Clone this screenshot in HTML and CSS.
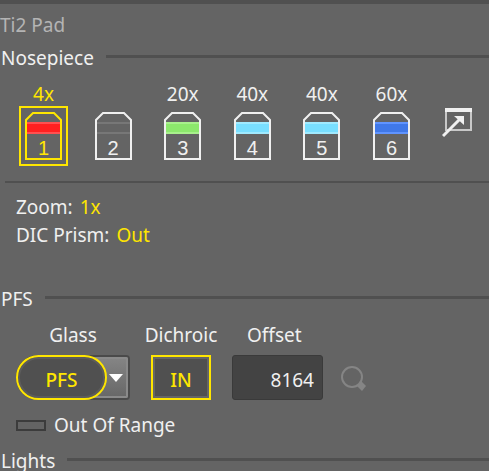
FILE: index.html
```html
<!DOCTYPE html>
<html lang="en">
<head>
<meta charset="utf-8">
<title>Ti2 Pad</title>
<link rel="stylesheet" href="styles.css">
</head>
<body>
<svg class="defs" aria-hidden="true">
  <symbol id="lens" viewBox="0 0 37 48">
    <rect class="band-edge" x="2" y="10" width="33" height="12"/>
    <rect class="band" x="2" y="12" width="33" height="8"/>
    <path d="M1 47V8L8 1H29L36 8V47Z" fill="none" stroke="currentColor" stroke-width="2"/>
  </symbol>
</svg>
<main class="pad">
  <h1 class="title">Ti2 Pad</h1>

  <section>
    <h2 class="heading">Nosepiece</h2>
    <div class="nosepiece">
      <div class="lenses">
        <button class="lens red selected" type="button" aria-pressed="true"><span class="power">4x</span><span class="frame"><svg><use href="#lens"/></svg><span class="slot">1</span></span></button>
        <button class="lens empty" type="button"><span class="power"></span><span class="frame"><svg><use href="#lens"/></svg><span class="slot">2</span></span></button>
        <button class="lens green" type="button"><span class="power">20x</span><span class="frame"><svg><use href="#lens"/></svg><span class="slot">3</span></span></button>
        <button class="lens cyan" type="button"><span class="power">40x</span><span class="frame"><svg><use href="#lens"/></svg><span class="slot">4</span></span></button>
        <button class="lens cyan" type="button"><span class="power">40x</span><span class="frame"><svg><use href="#lens"/></svg><span class="slot">5</span></span></button>
        <button class="lens blue" type="button"><span class="power">60x</span><span class="frame"><svg><use href="#lens"/></svg><span class="slot">6</span></span></button>
      </div>
      <button class="icon-button" type="button" aria-label="Open nosepiece window">
        <svg width="30" height="30" viewBox="0 0 30 30">
          <path d="M4 1H29V22H4Z" fill="none" stroke="#c8c8c8" stroke-width="2"/>
          <path d="M3 0H30V4H3Z" fill="#f0f0f0"/>
          <path d="M1 28L18 11" stroke="#f0f0f0" stroke-width="3"/>
          <path d="M12 8H22V17Z" fill="#f0f0f0"/>
        </svg>
      </button>
    </div>
    <dl class="status">
      <div><dt>Zoom:</dt><dd>1x</dd></div>
      <div><dt>DIC Prism:</dt><dd>Out</dd></div>
    </dl>
  </section>

  <section class="pfs">
    <h2 class="heading">PFS</h2>
    <div class="controls">
      <div class="field glass">
        <span class="label" id="glass">Glass</span>
        <div class="split" role="group" aria-labelledby="glass">
          <button class="pill" type="button">PFS</button>
          <button class="arrow" type="button" aria-label="Choose glass"><svg width="14" height="8" viewBox="0 0 14 8"><path d="M0 0H14L7 8Z" fill="#fff"/></svg></button>
        </div>
      </div>
      <div class="field dichroic">
        <span class="label" id="dichroic">Dichroic</span>
        <button class="toggle" type="button" aria-describedby="dichroic">IN</button>
      </div>
      <div class="field offset">
        <label class="label" for="offset">Offset</label>
        <input id="offset" type="text" value="8164">
      </div>
      <button class="icon-button search" type="button" aria-label="Search focus">
        <svg width="26" height="26" viewBox="0 0 26 26">
          <circle cx="11" cy="11" r="10" fill="none" stroke="#858585" stroke-width="2"/>
          <path d="M20 15L25 20L21 25L16 20Z" fill="#858585"/>
        </svg>
      </button>
    </div>
    <div class="range"><span class="lamp"></span>Out Of Range</div>
  </section>

  <section>
    <h2 class="heading">Lights</h2>
  </section>
</main>
</body>
</html>
```
FILE: styles.css
```css
* { box-sizing: border-box; }

html { background: #646464; }

body {
  margin: 0;
  overflow: hidden;
  color: #f0f0f0;
  font: 19px/28px "Noto Sans", "Open Sans", sans-serif;
}

button, input { font: inherit; color: inherit; }

button {
  margin: 0;
  padding: 0;
  border: 0;
  background: none;
}

svg { display: block; }

.defs { position: absolute; width: 0; height: 0; }

.pad { border-top: 4px solid #505050; padding-top: 7px; }

.title, .heading { margin: 0; font-size: 19px; font-weight: 400; }

.title { color: #b4b4b4; line-height: 28px; padding-bottom: 5px; }

.heading { display: flex; align-items: center; gap: 12px; padding-left: 1px; }

.heading::after { content: ""; flex: 1; height: 3px; margin-bottom: 3px; background: #505050; }

.nosepiece {
  display: flex;
  align-items: center;
  justify-content: space-between;
  margin-left: 5px;
  padding: 8px 17px 15px 14px;
  border-bottom: 2px solid #505050;
}

.lenses { display: flex; justify-content: space-between; flex: 0 1 397px; }

.lens {
  display: flex;
  flex-direction: column;
  align-items: center;
  width: 49px;
}

.power { height: 26px; line-height: 28px; }

.frame {
  display: grid;
  width: 49px;
  height: 60px;
  padding: 4px;
  border: 2px solid transparent;
}

.frame svg { grid-area: 1 / 1; width: 37px; height: 48px; }

.slot {
  grid-area: 1 / 1;
  align-self: end;
  font: 20px/24px "Liberation Sans", Arial, sans-serif;
}

.selected { color: #ffe600; }
.selected .frame { border-color: #ffe600; }

.band { fill: var(--band); }
.band-edge { fill: var(--edge); }

.red { --band: #ff2020; --edge: #ff5050; }
.empty { --band: #646464; --edge: #777; }
.green { --band: #8ce86c; --edge: #a8f08c; }
.cyan { --band: #78dfff; --edge: #a0eaff; }
.blue { --band: #4078e8; --edge: #6094ff; }

.status { margin: 0; padding: 10px 16px 36px; }
.status div { display: flex; gap: 7px; }
.status dd { margin: 0; color: #ffe600; }

.controls { display: flex; align-items: flex-end; padding: 8px 16px 0; }

.field { display: flex; flex-direction: column; align-items: center; }

.label { line-height: 28px; padding-bottom: 6px; }

.glass { width: 114px; }

.dichroic { width: 102px; }

.offset { align-items: flex-start; }
.offset .label { padding-left: 15px; }

.split {
  display: flex;
  width: 100%;
  height: 45px;
  border: 2px solid #4a4a4a;
  border-radius: 22px 4px 4px 22px;
  background: #4a4a4a;
}

.pill {
  z-index: 1;
  flex: none;
  width: 91px;
  height: 45px;
  margin: -2px;
  border: 2px solid #ffe600;
  border-radius: 23px;
  background: #505050;
  box-shadow: inset 0 0 0 2px #5c5c5c;
  color: #ffe600;
  font-weight: 500;
}

.arrow {
  display: flex;
  flex: 1;
  align-items: center;
  justify-content: flex-end;
  margin-left: -16px;
  padding-right: 3px;
  border: 2px solid #8a8a8a;
  border-left: 0;
  border-radius: 0 2px 2px 0;
  background: linear-gradient(#848484, #686868);
}

.toggle {
  width: 60px;
  height: 45px;
  border: 2px solid #ffe600;
  background: #505050;
  box-shadow: inset 0 0 0 2px #666;
  color: #ffe600;
  font-weight: 500;
}

.offset input {
  width: 91px;
  height: 45px;
  padding: 5px 8px 0;
  border: 1px solid #3a3a3a;
  border-radius: 3px;
  background: #434343;
  text-align: right;
}

.pill, .toggle { padding-top: 5px; }

.search { margin: 0 0 8px 18px; }

.range {
  display: flex;
  align-items: center;
  gap: 8px;
  padding: 11px 16px 8px;
}

.lamp { width: 30px; height: 11px; border: 2px solid #3c3c3c; }
```
